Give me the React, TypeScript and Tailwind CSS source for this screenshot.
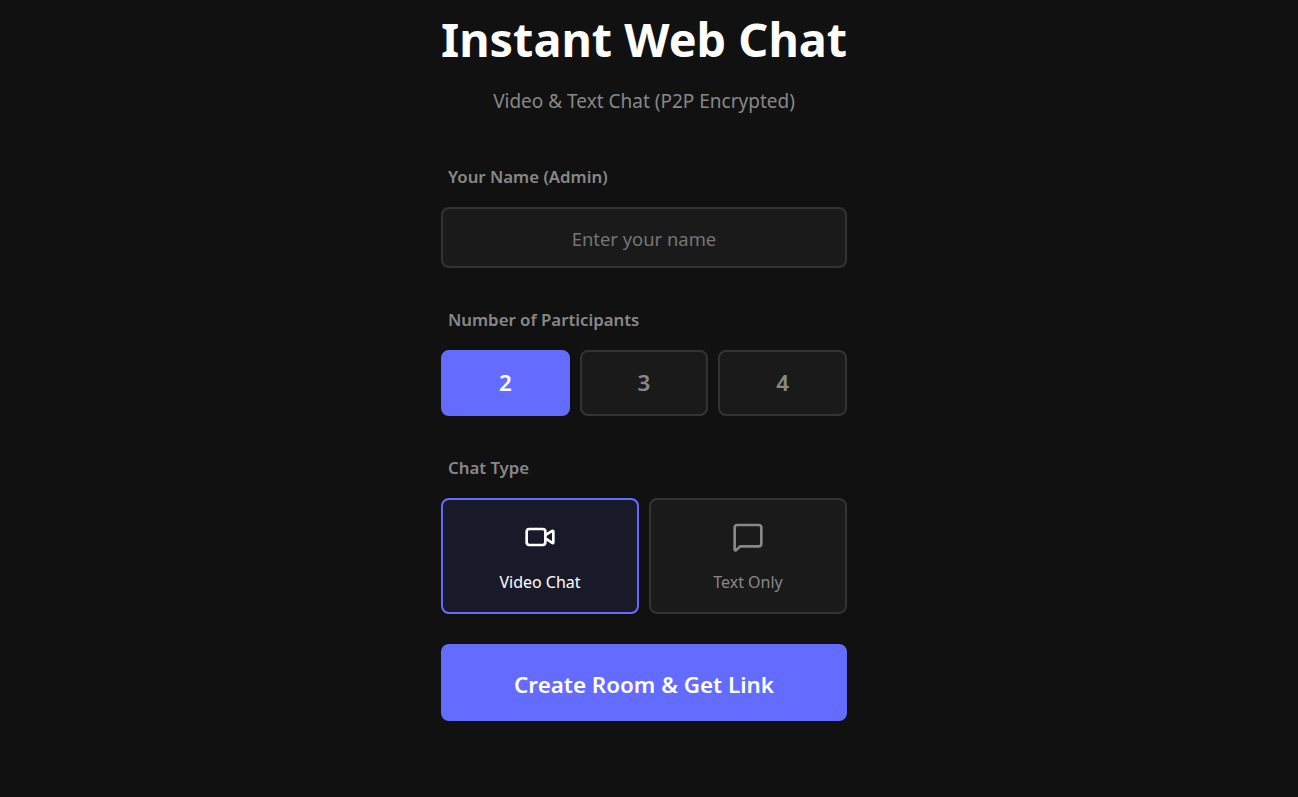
import { MessageSquare, Video } from "lucide-react";

export default function App() {
  return (
    <div className="min-h-[797px] bg-[#111111] flex justify-center pr-[10px] font-['Noto_Sans','Open_Sans',sans-serif] overflow-hidden">
      <div className="w-[406px] flex flex-col">
        <h1 className="text-[46.8px] leading-[65px] font-bold text-white text-center mt-[7px] mb-[1px] whitespace-nowrap">Instant Web Chat</h1>
        <p className="text-[#888888] text-[19px] leading-[24px] text-center mt-[16px]">Video &amp; Text Chat (P2P Encrypted)</p>

        <label className="text-[#888888] text-[16.8px] leading-[22px] font-semibold pl-[7px] mt-[53px]">Your Name (Admin)</label>
        <input
          placeholder="Enter your name"
          className="mt-[19px] h-[61px] w-full rounded-[8px] border-2 border-[#333333] bg-[#1a1a1a] pt-[2px] text-center text-[18.4px] text-white placeholder:text-[#757575] outline-none"
        />

        <label className="text-[#888888] text-[16.8px] leading-[22px] font-semibold pl-[7px] mt-[41px]">Number of Participants</label>
        <div className="mt-[19px] grid grid-cols-3 gap-[10px]">
          <button className="h-[66px] rounded-[8px] border-2 border-[#646cff] bg-[#646cff] text-white text-[22.4px] font-semibold">2</button>
          <button className="h-[66px] rounded-[8px] border-2 border-[#333333] bg-[#1a1a1a] text-[#888888] text-[22.4px] font-semibold">3</button>
          <button className="h-[66px] rounded-[8px] border-2 border-[#333333] bg-[#1a1a1a] text-[#888888] text-[22.4px] font-semibold">4</button>
        </div>

        <label className="text-[#888888] text-[16.8px] leading-[22px] font-semibold pl-[7px] mt-[41px]">Chat Type</label>
        <div className="mt-[19px] grid grid-cols-2 gap-[10px]">
          <button className="h-[116px] rounded-[8px] border-2 border-[#646cff] bg-[#646cff1a] pt-[2px] text-white flex flex-col items-center justify-center gap-[18px]">
            <Video size={32} strokeWidth={2} />
            <span className="text-[16px] leading-[22px]">Video Chat</span>
          </button>
          <button className="h-[116px] rounded-[8px] border-2 border-[#333333] bg-[#1a1a1a] pt-[2px] text-[#888888] flex flex-col items-center justify-center gap-[18px]">
            <MessageSquare size={32} strokeWidth={2} />
            <span className="text-[16px] leading-[22px]">Text Only</span>
          </button>
        </div>

        <button className="mt-[30px] h-[77px] rounded-[8px] bg-[#646cff] pt-[4px] text-white text-[22.4px] font-semibold">Create Room &amp; Get Link</button>
      </div>
    </div>
  );
}
